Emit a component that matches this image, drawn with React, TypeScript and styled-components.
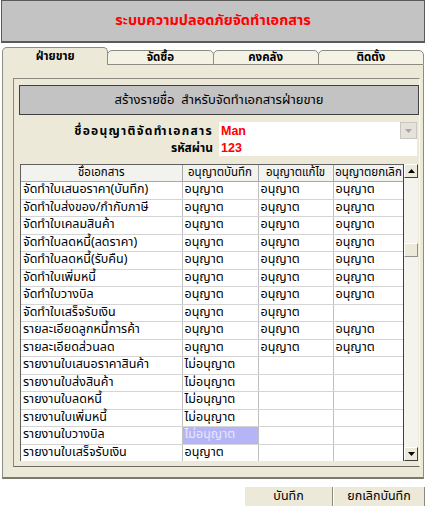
import React from "react";
import styled, { createGlobalStyle } from "styled-components";

const Global = createGlobalStyle`
  html, body { margin: 0; padding: 0; background: #ffffff; }
  body { font-family: Tahoma, "Noto Sans Thai", "Noto Sans", "DejaVu Sans", sans-serif; }
`;

const Page = styled.div`
  width: 425px;
  height: 506px;
  display: flex;
  flex-direction: column;
  overflow: hidden;
  background: #ffffff;
`;

const TitleBar = styled.div`
  height: 40px;
  margin: 0 0 0 1px;
  background: #c3c3c3;
  border: 1px solid #5a5a5a;
  border-bottom-width: 2px;
  display: flex;
  align-items: center;
  justify-content: center;
  color: #ff0000;
  font-weight: bold;
  font-size: 14.5px;
`;

const TabStrip = styled.div`
  margin: 4px 1px 0 2px;
  height: 18px;
  display: flex;
  align-items: flex-end;
`;

const Tab = styled.div<{ $active?: boolean }>`
  flex: 1;
  height: ${(p) => (p.$active ? 18 : 15)}px;
  box-sizing: border-box;
  background: ${(p) => (p.$active ? "#ece9d8" : "#f4f2e4")};
  border: 1px solid #8c8c80;
  border-bottom: ${(p) => (p.$active ? "none" : "1px solid #8c8c80")};
  border-radius: 5px 5px 0 0;
  display: flex;
  align-items: center;
  justify-content: center;
  font-size: 11.5px;
  line-height: 14px;
  font-weight: bold;
  color: #000;
  margin-left: -1px;
  &:first-child { margin-left: 0; }
`;

const Panel = styled.div`
  margin: 0 1px 0 2px;
  height: 414px;
  box-sizing: border-box;
  background: #ece9d8;
  border: 1px solid #8c8c80;
  border-top: none;
  border-bottom: 2px solid #7a7a70;
  padding: 13px 3px 10px 10px;
  display: flex;
`;

const GroupBox = styled.div`
  flex: 1;
  box-sizing: border-box;
  border: 1px solid #8a8a80;
  border-right-color: #f8f8f0;
  border-bottom-color: #6a6a60;
  padding: 6px 0 5px 5px;
  display: flex;
  flex-direction: column;
  overflow: hidden;
`;

const Heading = styled.div`
  height: 30px;
  flex-shrink: 0;
  box-sizing: border-box;
  background: #c3c3c3;
  border: 1px solid #404040;
  display: flex;
  align-items: center;
  justify-content: center;
  font-size: 13px;
  color: #000;
  white-space: pre;
`;

const Form = styled.div`
  margin-top: 7px;
  display: grid;
  grid-template-columns: 194px 198px;
  column-gap: 6px;
  row-gap: 0;
`;

const Label = styled.div<{ $spacing?: number }>`
  height: 17px;
  display: flex;
  align-items: center;
  justify-content: flex-end;
  font-size: 12px;
  font-weight: bold;
  letter-spacing: ${(p) => p.$spacing ?? 0}px;
  color: #000;
`;

const Field = styled.div`
  height: 17px;
  background: #ffffff;
  display: flex;
  align-items: center;
  padding-left: 2px;
  font-family: Arial, "Liberation Sans", sans-serif;
  font-size: 12.5px;
  font-weight: bold;
  color: #ff0000;
  position: relative;
`;

const DropButton = styled.div`
  position: absolute;
  right: 0;
  top: 0;
  width: 17px;
  height: 17px;
  box-sizing: border-box;
  background: #e4e2da;
  border: 1px solid #c8c6be;
  display: flex;
  align-items: center;
  justify-content: center;
`;

const GridWrap = styled.div`
  margin-top: 8px;
  margin-left: 1px;
  display: flex;
  height: 297px;
  width: 398px;
  flex-shrink: 0;
`;

const TableBox = styled.div`
  width: 384px;
  box-sizing: border-box;
  border-left: 1px solid #606060;
  border-top: 1px solid #606060;
  border-right: 1px solid #404040;
  background: #ffffff;
  overflow: hidden;
`;

const Table = styled.table`
  border-collapse: collapse;
  table-layout: fixed;
  width: 383px;
  font-size: 12.5px;
  color: #000;
`;

const Th = styled.th`
  height: 16px;
  padding: 0;
  font-size: 11.5px;
  line-height: 16px;
  font-weight: normal;
  background: #f2f2ee;
  border-right: 1px solid #a8a8a8;
  border-bottom: 1px solid #a8a8a8;
  text-align: center;
  white-space: nowrap;
`;

const Td = styled.td<{ $hl?: boolean }>`
  height: 16.5px;
  line-height: 14px;
  padding: 0 0 0 2px;
  border-right: 1px solid #c0c0c0;
  border-bottom: 1px solid #d4d4d4;
  white-space: nowrap;
  background: ${(p) => (p.$hl ? "#b4b4f6" : "#ffffff")};
  color: ${(p) => (p.$hl ? "#e8e8ff" : "#000")};
`;

const ScrollBar = styled.div`
  width: 14px;
  background: #f4f3ee;
  display: flex;
  flex-direction: column;
  justify-content: space-between;
  position: relative;
`;

const ScrollBtn = styled.div`
  width: 14px;
  height: 14px;
  box-sizing: border-box;
  background: #ece9d8;
  border: 1px solid;
  border-color: #ffffff #404040 #404040 #ffffff;
  display: flex;
  align-items: center;
  justify-content: center;
`;

const Thumb = styled.div`
  position: absolute;
  left: 0;
  top: 79px;
  width: 14px;
  height: 14px;
  box-sizing: border-box;
  background: #ece9d8;
  border: 1px solid;
  border-color: #ffffff #909090 #909090 #ffffff;
`;

const Footer = styled.div`
  margin-top: 8px;
  display: flex;
  justify-content: flex-end;
`;

const Button = styled.div<{ $w: number }>`
  width: ${(p) => p.$w}px;
  height: 19px;
  box-sizing: border-box;
  background: #ece9d8;
  border-left: 1px solid #ffffff;
  border-right: 1px solid #8a8a80;
  display: flex;
  align-items: center;
  justify-content: center;
  font-size: 12.5px;
  color: #000;
`;

type Row = [string, string, string, string];

const rows: Row[] = [
  ["จัดทำใบเสนอราคา(บันทึก)", "อนุญาต", "อนุญาต", "อนุญาต"],
  ["จัดทำใบส่งของ/กำกับภาษี", "อนุญาต", "อนุญาต", "อนุญาต"],
  ["จัดทำใบเคลมสินค้า", "อนุญาต", "อนุญาต", "อนุญาต"],
  ["จัดทำใบลดหนี้(ลดราคา)", "อนุญาต", "อนุญาต", "อนุญาต"],
  ["จัดทำใบลดหนี้(รับคืน)", "อนุญาต", "อนุญาต", "อนุญาต"],
  ["จัดทำใบเพิ่มหนี้", "อนุญาต", "อนุญาต", "อนุญาต"],
  ["จัดทำใบวางบิล", "อนุญาต", "อนุญาต", "อนุญาต"],
  ["จัดทำใบเสร็จรับเงิน", "อนุญาต", "อนุญาต", ""],
  ["รายละเอียดลูกหนี้การค้า", "อนุญาต", "อนุญาต", "อนุญาต"],
  ["รายละเอียดส่วนลด", "อนุญาต", "อนุญาต", "อนุญาต"],
  ["รายงานใบเสนอราคาสินค้า", "ไม่อนุญาต", "", ""],
  ["รายงานใบส่งสินค้า", "ไม่อนุญาต", "", ""],
  ["รายงานใบลดหนี้", "ไม่อนุญาต", "", ""],
  ["รายงานใบเพิ่มหนี้", "ไม่อนุญาต", "", ""],
  ["รายงานใบวางบิล", "ไม่อนุญาต", "", ""],
  ["รายงานใบเสร็จรับเงิน", "อนุญาต", "", ""],
];

const Arrow = ({ up }: { up?: boolean }) => (
  <svg width="7" height="4" viewBox="0 0 7 4">
    <polygon points={up ? "0,4 7,4 3.5,0" : "0,0 7,0 3.5,4"} fill="#000" />
  </svg>
);

export default function App() {
  return (
    <Page>
      <Global />
      <TitleBar>ระบบความปลอดภัยจัดทำเอกสาร</TitleBar>
      <TabStrip>
        <Tab $active>ฝ่ายขาย</Tab>
        <Tab>จัดซื้อ</Tab>
        <Tab>คงคลัง</Tab>
        <Tab>ติดตั้ง</Tab>
      </TabStrip>
      <Panel>
        <GroupBox>
          <Heading>{"สร้างรายชื่อ  สำหรับจัดทำเอกสารฝ่ายขาย"}</Heading>
          <Form>
            <Label $spacing={1.3}>ชื่ออนุญาติจัดทำเอกสาร</Label>
            <Field>
              Man
              <DropButton>
                <svg width="7" height="4" viewBox="0 0 7 4">
                  <polygon points="0,0 7,0 3.5,4" fill="#a8a8a0" />
                </svg>
              </DropButton>
            </Field>
            <Label>รหัสผ่าน</Label>
            <Field>123</Field>
          </Form>
          <GridWrap>
            <TableBox>
              <Table>
                <colgroup>
                  <col style={{ width: 161 }} />
                  <col style={{ width: 76 }} />
                  <col style={{ width: 75 }} />
                  <col style={{ width: 71 }} />
                </colgroup>
                <thead>
                  <tr>
                    <Th>ชื่อเอกสาร</Th>
                    <Th>อนุญาตบันทึก</Th>
                    <Th>อนุญาตแก้ไข</Th>
                    <Th>อนุญาตยกเลิก</Th>
                  </tr>
                </thead>
                <tbody>
                  {rows.map((r, i) => (
                    <tr key={i}>
                      <Td>{r[0]}</Td>
                      <Td $hl={i === 14}>{r[1]}</Td>
                      <Td>{r[2]}</Td>
                      <Td>{r[3]}</Td>
                    </tr>
                  ))}
                </tbody>
              </Table>
            </TableBox>
            <ScrollBar>
              <ScrollBtn>
                <Arrow up />
              </ScrollBtn>
              <Thumb />
              <ScrollBtn>
                <Arrow />
              </ScrollBtn>
            </ScrollBar>
          </GridWrap>
        </GroupBox>
      </Panel>
      <Footer>
        <Button $w={89}>บันทึก</Button>
        <Button $w={92}>ยกเลิกบันทึก</Button>
      </Footer>
    </Page>
  );
}
